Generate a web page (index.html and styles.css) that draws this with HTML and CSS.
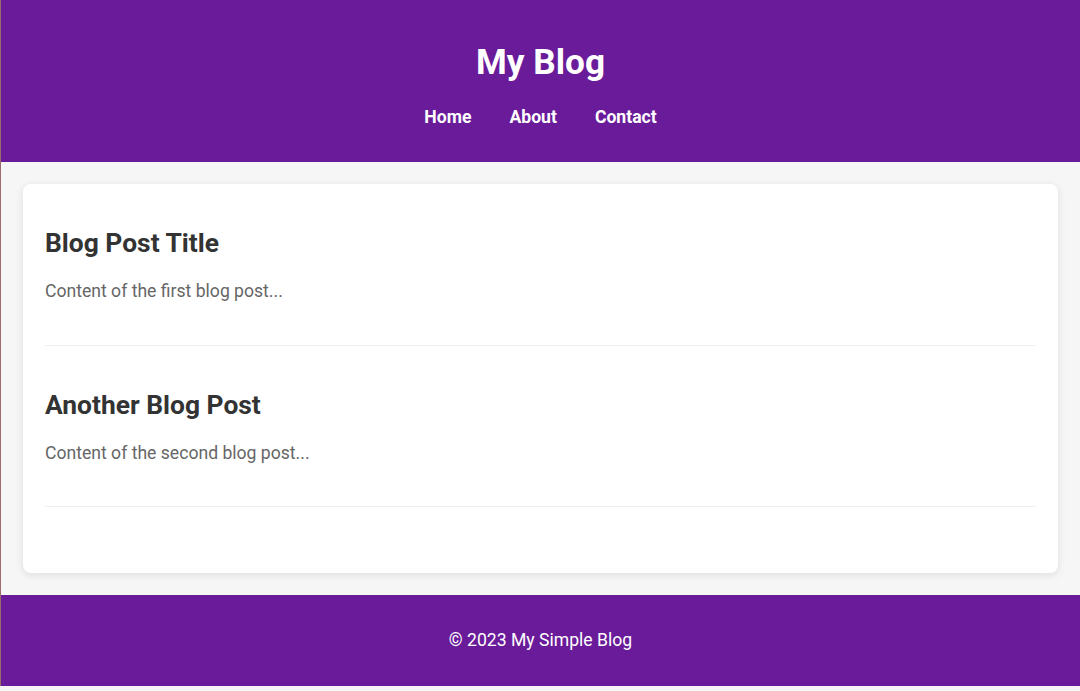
FILE: index.html
```html
<!DOCTYPE html>
<html lang="en">
<head>
<meta charset="utf-8">
<title>My Blog</title>
<link rel="stylesheet" href="styles.css">
</head>
<body>
<header class="site-header">
  <h1 class="site-title">My Blog</h1>
  <nav class="site-nav">
    <a href="#" class="nav-link">Home</a>
    <a href="#" class="nav-link">About</a>
    <a href="#" class="nav-link">Contact</a>
  </nav>
</header>
<main class="content">
  <section class="card">
    <article class="post">
      <h2 class="post-title">Blog Post Title</h2>
      <p class="post-body">Content of the first blog post...</p>
    </article>
    <article class="post">
      <h2 class="post-title">Another Blog Post</h2>
      <p class="post-body">Content of the second blog post...</p>
    </article>
  </section>
</main>
<footer class="site-footer">
  <p class="footer-text">© 2023 My Simple Blog</p>
</footer>
</body>
</html>
```
FILE: styles.css
```css
html {
  background: #f6f6f6;
}
body {
  margin: 0;
  font-family: Roboto, "Liberation Sans", sans-serif;
  font-size: 17.6px;
  background: #f6f6f6;
  border-left: 1px solid #9c6b6b;
}
.site-header {
  background: #6a1b9a;
  color: #fff;
  text-align: center;
  padding: 40px 20px 33px;
}
.site-title {
  margin: 0 0 21px;
  font-size: 35.2px;
  font-weight: 700;
  line-height: 44px;
}
.site-nav {
  display: flex;
  justify-content: center;
  gap: 38px;
}
.nav-link {
  color: #fff;
  text-decoration: none;
  font-weight: 700;
  font-size: 17.6px;
  line-height: 24px;
}
.content {
  padding: 22px;
}
.card {
  background: #fff;
  border-radius: 8px;
  box-shadow: 0 2px 8px rgba(0,0,0,0.1);
  padding: 22px 22px 44px;
}
.post {
  display: flow-root;
  border-bottom: 1px solid #f0f0f0;
  padding-bottom: 25px;
  margin-bottom: 22px;
}
.post-title {
  margin: 22px 0;
  font-size: 26.4px;
  font-weight: 700;
  color: #333;
  line-height: 31px;
}
.post-body {
  margin: 0 0 17.6px;
  font-size: 17.6px;
  color: #666;
  line-height: 21px;
}
.site-footer {
  background: #6a1b9a;
  color: #fff;
  text-align: center;
  padding: 35px 20px;
}
.footer-text {
  margin: 0;
  font-size: 17.6px;
  line-height: 21px;
}
```
